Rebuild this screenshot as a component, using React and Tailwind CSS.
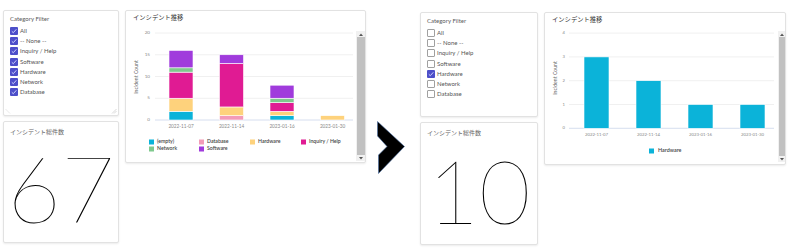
import React from "react";

const C = {
  empty: "#0bb3d9",
  Database: "#f39bb8",
  Hardware: "#fed27c",
  Inquiry: "#e01b93",
  Network: "#7fc98d",
  Software: "#a03bdc",
};

const LAT = "Lato, 'Noto Sans CJK JP', sans-serif";

function Checkbox({ checked }) {
  if (checked) {
    return (
      <span className="w-[8px] h-[8px] rounded-[1px] bg-[#4d4fc9] flex items-center justify-center shrink-0">
        <svg width="8" height="8" viewBox="0 0 8 8">
          <path d="M1.8 4.3 L3.3 5.7 L6.3 2.3" stroke="#d9dcff" strokeWidth="0.9" fill="none" />
        </svg>
      </span>
    );
  }
  return <span className="w-[8px] h-[8px] rounded-[1px] border border-[#a0a0a0] bg-white shrink-0" />;
}

const ITEMS = ["All", "-- None --", "Inquiry / Help", "Software", "Hardware", "Network", "Database"];

function FilterCard({ checkedFn, h, w, grip }) {
  return (
    <div className={`relative ${h} ${w} bg-white border border-[#e2e2e2] rounded-[2px] shadow-[0_1px_2px_rgba(0,0,0,0.08)] pl-[6px] pt-[3px] box-border`}>
      <div className="text-[6px] leading-[10px] text-[#5a5a5a] font-['Lato']">Category Filter</div>
      <div className="mt-[2px] flex flex-col">
        {ITEMS.map((it) => (
          <div key={it} className="h-[10.2px] flex items-center gap-[2px]">
            <Checkbox checked={checkedFn(it)} />
            <span className="text-[6px] leading-[10px] text-[#555] font-['Lato']">{it}</span>
          </div>
        ))}
      </div>
      {grip && (
        <>
          <svg className="absolute right-[1px] bottom-[1px]" width="6" height="6" viewBox="0 0 6 6">
            <path d="M1 5.5 L5.5 1 M3 5.5 L5.5 3" stroke="#c8c8c8" strokeWidth="0.7" />
          </svg>
          <svg className="absolute left-[1px] bottom-[1px]" width="6" height="6" viewBox="0 0 6 6">
            <path d="M0.5 1 L5 5.5" stroke="#e0e0e0" strokeWidth="0.7" />
          </svg>
        </>
      )}
    </div>
  );
}

function CountCard({ value, h, w, size, pb }) {
  return (
    <div className={`${h} ${w} bg-white border border-[#e2e2e2] rounded-[2px] shadow-[0_1px_2px_rgba(0,0,0,0.08)] box-border flex flex-col`}>
      <div className="pl-[6px] pt-[6px] text-[6px] leading-[8px] text-[#666] font-['Lato','Noto_Sans_CJK_JP',sans-serif]">
        インシデント総件数
      </div>
      <div className={`flex-1 flex items-center justify-center ${pb}`}>
        <span className={`${size} leading-none font-['Lato'] font-[200] text-black`}>{value}</span>
      </div>
    </div>
  );
}

function Scrollbar({ w, h, mt }) {
  return (
    <div className={`${w} ${h} ${mt} flex flex-col bg-[#f1f1f1] shrink-0`}>
      <div className="h-[6px] flex items-center justify-center">
        <svg width="4" height="3" viewBox="0 0 4 3">
          <path d="M0 3 L2 0.5 L4 3 Z" fill="#555" />
        </svg>
      </div>
      <div className="flex-1 bg-[#c1c1c1] mx-[0.5px]" />
      <div className="h-[6px] flex items-center justify-center">
        <svg width="4" height="3" viewBox="0 0 4 3">
          <path d="M0 0 L2 2.5 L4 0 Z" fill="#555" />
        </svg>
      </div>
    </div>
  );
}

const DATES = ["2022-11-07", "2022-11-14", "2023-01-16", "2023-01-30"];

function LeftChart() {
  const base = 96;
  const u = 4.35;
  const x0 = 29,
    x1 = 227;
  const centers = [55, 105.5, 156, 206.5];
  const bars = [
    [["empty", 2], ["Hardware", 3], ["Inquiry", 6], ["Network", 1], ["Software", 4]],
    [["Database", 1], ["Hardware", 2], ["Inquiry", 10], ["Software", 2]],
    [["empty", 1], ["Hardware", 1], ["Inquiry", 2], ["Network", 1], ["Software", 3]],
    [["Hardware", 1]],
  ];
  const legend = [
    ["empty", "(empty)", 23, 118],
    ["Database", "Database", 73, 118],
    ["Hardware", "Hardware", 124, 118],
    ["Inquiry", "Inquiry / Help", 175, 118],
    ["Network", "Network", 23, 125],
    ["Software", "Software", 73, 125],
  ];
  return (
    <svg width="230" height="138" viewBox="0 0 230 138" className="shrink-0" style={{ fontFamily: LAT }}>
      {[5, 10, 15, 20].map((v) => (
        <line key={v} x1={x0} x2={x1} y1={base - v * u} y2={base - v * u} stroke="#ececec" strokeWidth="0.8" />
      ))}
      <line x1={x0} x2={x1} y1={base} y2={base} stroke="#ccd6eb" strokeWidth="0.8" />
      {[0, 5, 10, 15, 20].map((v) => (
        <text key={v} x="24" y={base - v * u} textAnchor="end" dominantBaseline="middle" fontSize="4.6" fill="#888">
          {v}
        </text>
      ))}
      <text transform="translate(11 53) rotate(-90)" textAnchor="middle" dominantBaseline="middle" fontSize="5.2" fill="#666">
        Incident Count
      </text>
      {bars.map((segs, i) => {
        let acc = 0;
        return segs.map(([k, n]) => {
          const y = base - (acc + n) * u;
          acc += n;
          return (
            <rect key={i + k} x={centers[i] - 12} y={y} width="24" height={n * u} fill={C[k]} stroke="#fff" strokeWidth="0.6" />
          );
        });
      })}
      {DATES.map((d, i) => (
        <text key={d} x={centers[i]} y="102.5" textAnchor="middle" dominantBaseline="middle" fontSize="4.7" fill="#888">
          {d}
        </text>
      ))}
      {legend.map(([k, label, x, y]) => (
        <g key={k}>
          <rect x={x} y={y - 2.5} width="5" height="5" fill={C[k]} />
          <text x={x + 8} y={y} dominantBaseline="middle" fontSize="5.2" fontWeight="600" fill="#444">
            {label}
          </text>
        </g>
      ))}
    </svg>
  );
}

function RightChart() {
  const base = 102.3;
  const u = 23.8;
  const x0 = 24,
    x1 = 229;
  const centers = [51.5, 103.5, 155.5, 207.5];
  const vals = [3, 2, 1, 1];
  return (
    <svg width="233" height="138" viewBox="0 0 233 138" className="shrink-0" style={{ fontFamily: LAT }}>
      {[1, 2, 3, 4].map((v) => (
        <line key={v} x1={x0} x2={x1} y1={base - v * u} y2={base - v * u} stroke="#ececec" strokeWidth="0.8" />
      ))}
      <line x1={x0} x2={x1} y1={base} y2={base} stroke="#ccd6eb" strokeWidth="0.8" />
      {[0, 1, 2, 3, 4].map((v) => (
        <text key={v} x="20" y={base - v * u} textAnchor="end" dominantBaseline="middle" fontSize="4.2" fill="#888">
          {v}
        </text>
      ))}
      <text transform="translate(11 52) rotate(-90)" textAnchor="middle" dominantBaseline="middle" fontSize="5.2" fill="#666">
        Incident Count
      </text>
      {vals.map((n, i) => (
        <rect key={i} x={centers[i] - 12.5} y={base - n * u} width="25" height={n * u} fill={C.empty} stroke="#fff" strokeWidth="0.6" />
      ))}
      {DATES.map((d, i) => (
        <text key={d} x={centers[i]} y="109" textAnchor="middle" dominantBaseline="middle" fontSize="4.3" fill="#888">
          {d}
        </text>
      ))}
      <rect x="104" y="122.5" width="5" height="5" fill={C.empty} />
      <text x="113" y="125" dominantBaseline="middle" fontSize="5.4" fontWeight="600" fill="#444">
        Hardware
      </text>
    </svg>
  );
}

function ChartCard({ w, children, scroll }) {
  return (
    <div className={`${w} h-[153px] bg-white border border-[#e2e2e2] rounded-[2px] shadow-[0_1px_2px_rgba(0,0,0,0.08)] box-border flex flex-col`}>
      <div className="h-[13px] pl-[7px] pt-[3px] text-[6.3px] leading-[8px] text-[#333] font-['Lato','Noto_Sans_CJK_JP',sans-serif]">
        インシデント推移
      </div>
      <div className="flex">
        {children}
        {scroll}
      </div>
    </div>
  );
}

function Arrow() {
  return (
    <svg width="29" height="54" viewBox="0 0 29 54">
      <polygon points="0.5,0.5 27.5,25.5 1.5,52.5 1.5,34 10,25.5 0.5,15" fill="#000" stroke="#4a6fa5" strokeWidth="0.6" />
    </svg>
  );
}

export default function App() {
  return (
    <div className="w-[800px] h-[252px] bg-white flex overflow-hidden">
      <div className="flex gap-[6px] pl-[3px] pt-[10px] items-start">
        <div className="flex flex-col gap-[5px]">
          <FilterCard checkedFn={() => true} h="h-[106px]" w="w-[116px]" grip />
          <CountCard value="67" h="h-[122px]" w="w-[116px]" size="text-[93px]" pb="pb-[4px]" />
        </div>
        <ChartCard w="w-[241px]" scroll={<Scrollbar w="w-[9px]" h="h-[130px]" mt="mt-[7px]" />}>
          <LeftChart />
        </ChartCard>
      </div>
      <div className="ml-[11px] mt-[121px]">
        <Arrow />
      </div>
      <div className="ml-[14px] flex gap-[6px] pt-[12px] items-start">
        <div className="flex flex-col gap-[5px]">
          <FilterCard checkedFn={(it) => it === "Hardware"} h="h-[105px]" w="w-[118px]" />
          <CountCard value="10" h="h-[123px]" w="w-[118px]" size="text-[89px]" pb="pb-[2px]" />
        </div>
        <ChartCard w="w-[242px]" scroll={<Scrollbar w="w-[7px]" h="h-[131px]" mt="mt-[5px]" />}>
          <RightChart />
        </ChartCard>
      </div>
    </div>
  );
}
